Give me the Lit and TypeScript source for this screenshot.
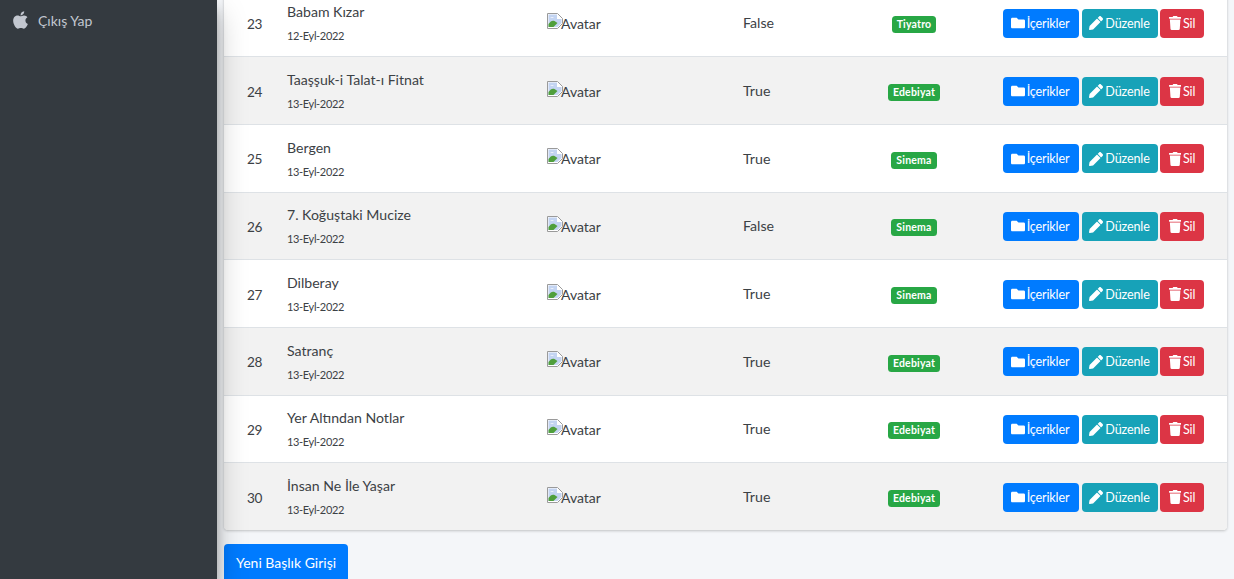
import { LitElement, html, css, svg } from "lit";
import { customElement } from "lit/decorators.js";

const rows = [
  ["23", "Babam Kızar", "12-Eyl-2022", "False", "Tiyatro"],
  ["24", "Taaşşuk-i Talat-ı Fitnat", "13-Eyl-2022", "True", "Edebiyat"],
  ["25", "Bergen", "13-Eyl-2022", "True", "Sinema"],
  ["26", "7. Koğuştaki Mucize", "13-Eyl-2022", "False", "Sinema"],
  ["27", "Dilberay", "13-Eyl-2022", "True", "Sinema"],
  ["28", "Satranç", "13-Eyl-2022", "True", "Edebiyat"],
  ["29", "Yer Altından Notlar", "13-Eyl-2022", "True", "Edebiyat"],
  ["30", "İnsan Ne İle Yaşar", "13-Eyl-2022", "True", "Edebiyat"],
];

const apple = svg`<path fill="currentColor" d="M318.7 268.7c-.2-36.7 16.4-64.4 50-84.8-18.8-26.9-47.2-41.7-84.7-44.6-35.5-2.8-74.3 20.7-88.5 20.7-15 0-49.4-19.7-76.4-19.7C63.3 141.2 4 184.8 4 273.5q0 39.3 14.4 81.2c12.8 36.7 59 126.7 107.2 125.2 25.2-.6 43-17.9 75.8-17.9 31.8 0 48.3 17.9 76.4 17.9 48.6-.7 90.4-82.5 102.6-119.3-65.2-30.7-61.7-90-61.7-91.9zm-56.6-164.2c27.3-32.4 24.8-61.9 24-72.5-24.1 1.4-52 16.4-67.9 34.9-17.5 19.8-27.8 44.3-25.6 71.9 26.1 2 49.9-11.4 69.5-34.3z"/>`;
const folder = svg`<path fill="currentColor" d="M464 128H272l-64-64H48C21.49 64 0 85.49 0 112v288c0 26.51 21.49 48 48 48h416c26.51 0 48-21.49 48-48V176c0-26.51-21.49-48-48-48z"/>`;
const pencil = svg`<path fill="currentColor" d="M497.9 142.1l-46.1 46.1c-4.7 4.7-12.3 4.7-17 0l-111-111c-4.7-4.7-4.7-12.3 0-17l46.1-46.1c18.7-18.7 49.1-18.7 67.9 0l60.1 60.1c18.8 18.7 18.8 49.1 0 67.9zM284.2 99.8L21.6 362.4.4 483.9c-2.9 16.4 11.4 30.6 27.8 27.8l121.5-21.3 262.6-262.6c4.7-4.7 4.7-12.3 0-17l-111-111c-4.8-4.7-12.4-4.7-17.1 0z"/>`;
const trash = svg`<path fill="currentColor" d="M432 32H312l-9.4-18.7A24 24 0 0 0 281.1 0H166.8a23.72 23.72 0 0 0-21.4 13.3L136 32H16A16 16 0 0 0 0 48v32a16 16 0 0 0 16 16h416a16 16 0 0 0 16-16V48a16 16 0 0 0-16-16zM53.2 467a48 48 0 0 0 47.9 45h245.8a48 48 0 0 0 47.9-45L416 128H32z"/>`;

@customElement("app-root")
export class AppRoot extends LitElement {
  static styles = css`
    :host {
      display: flex;
      width: 1234px;
      height: 579px;
      overflow: hidden;
      background: #f4f6f9;
      font-family: "Lato", "Noto Sans", sans-serif;
      color: #212529;
      font-size: 14.2px;
    }
    .side {
      width: 217px;
      flex: none;
      background: #343a40;
      box-shadow: 0 14px 28px rgba(0,0,0,.25), 0 10px 10px rgba(0,0,0,.22);
      color: #c2c7d0;
      position: relative;
      z-index: 2;
    }
    .logout {
      display: flex;
      align-items: center;
      gap: 10px;
      padding: 10px 0 0 13px;
      font-size: 14px;
    }
    .logout svg { width: 15px; height: 20px; color: #c2c7d0; }
    .main {
      flex: 1;
      padding: 0 7px;
      min-width: 0;
    }
    .card {
      margin-top: -11px;
      background: #fff;
      border-radius: 4px;
      box-shadow: 0 0 1px rgba(0,0,0,.125), 0 1px 3px rgba(0,0,0,.2);
      overflow: hidden;
    }
    table {
      width: 1003px;
      border-collapse: collapse;
      table-layout: fixed;
    }
    tr { height: 67.7px; }
    tr:last-child { height: 67px; }
    tr:nth-child(even) { background: #f2f2f2; }
    td {
      padding: 0 0 0 12px;
      border-top: 1px solid #dee2e6;
      vertical-align: middle;
      color: #3c4145;
    }
    tr:first-child td { border-top: none; }
    td.num { padding-left: 23px; padding-top: 2px; font-size: 13.6px; letter-spacing: -.5px; }
    td.info { padding-top: 1px; }
    .title { line-height: 20px; font-size: 14.1px; margin-top: -1px; }
    .date { font-size: 11px; letter-spacing: -.35px; line-height: 14px; margin-top: 7px; }
    .ava { display: flex; align-items: flex-end; font-size: 14px; line-height: 16px; margin-top: -2px; }
    .ava svg { width: 16px; height: 16px; flex: none; margin-bottom: 2px; margin-right: -2px; }
    .ava span { margin-bottom: -1px; }
    td.bc { text-align: center; padding: 2px 0 0 0; }
    .badge {
      display: inline-block;
      background: #28a745;
      color: #fff;
      font-size: 10.5px;
      font-weight: 700;
      letter-spacing: .2px;
      line-height: 11px;
      padding: 3px 5px;
      border-radius: 3.5px;
      vertical-align: middle;
    }
    .acts { display: flex; gap: 2.5px; margin-top: 1px; }
    .btn {
      display: flex;
      align-items: center;
      justify-content: center;
      gap: 2px;
      height: 29px;
      color: #fff;
      border-radius: 4px;
      font-size: 12.6px;
      letter-spacing: -.15px;
      box-sizing: border-box;
      flex: none;
    }
    .btn svg { height: 14px; flex: none; }
    .blue { background: #007bff; width: 76px; padding-right: 2px; }
    .teal { background: #17a2b8; width: 76px; }
    .red { background: #dc3545; width: 44px; }
    .new {
      display: inline-flex;
      align-items: center;
      margin-top: 14px;
      height: 38px;
      padding: 0 12px 1px;
      background: #007bff;
      color: #fff;
      border-radius: 4px;
      font-size: 14px;
      box-sizing: border-box;
    }
  `;

  render() {
    return html`
      <aside class="side">
        <div class="logout">
          <svg viewBox="0 0 384 512">${apple}</svg>
          <span>Çıkış Yap</span>
        </div>
      </aside>
      <main class="main">
        <div class="card">
          <table>
            <colgroup>
              <col style="width:51px" /><col style="width:260px" /><col style="width:196px" />
              <col style="width:106px" /><col style="width:154px" /><col style="width:236px" />
            </colgroup>
            <tbody>
              ${rows.map(
                (r) => html`<tr>
                  <td class="num">${r[0]}</td>
                  <td class="info">
                    <div class="title">${r[1]}</div>
                    <div class="date">${r[2]}</div>
                  </td>
                  <td>
                    <div class="ava">
                      <svg viewBox="0 0 16 16">
                        <path d="M.5.5h10l5 5v5l-5 5h-10z" fill="#fff" stroke="#9a9a9a" />
                        <path d="M1.5 1.5h8.5v4.5h4.5v4l-4 4h-9z" fill="#c3d4f2" />
                        <path d="M1.5 14v-3c2-3 4-4 6-3l3 2-4 4z" fill="#4f9f3c" />
                        <path d="M3 5c1.5-1.2 3-1 4 0z" fill="#fff" />
                      </svg>
                      <span>Avatar</span>
                    </div>
                  </td>
                  <td>${r[3]}</td>
                  <td class="bc"><span class="badge">${r[4]}</span></td>
                  <td>
                    <div class="acts">
                      <div class="btn blue"><svg viewBox="0 0 512 512">${folder}</svg><span>İçerikler</span></div>
                      <div class="btn teal"><svg viewBox="0 0 512 512">${pencil}</svg><span>Düzenle</span></div>
                      <div class="btn red"><svg viewBox="0 0 448 512">${trash}</svg><span>Sil</span></div>
                    </div>
                  </td>
                </tr>`
              )}
            </tbody>
          </table>
        </div>
        <div class="new">Yeni Başlık Girişi</div>
      </main>
    `;
  }
}
